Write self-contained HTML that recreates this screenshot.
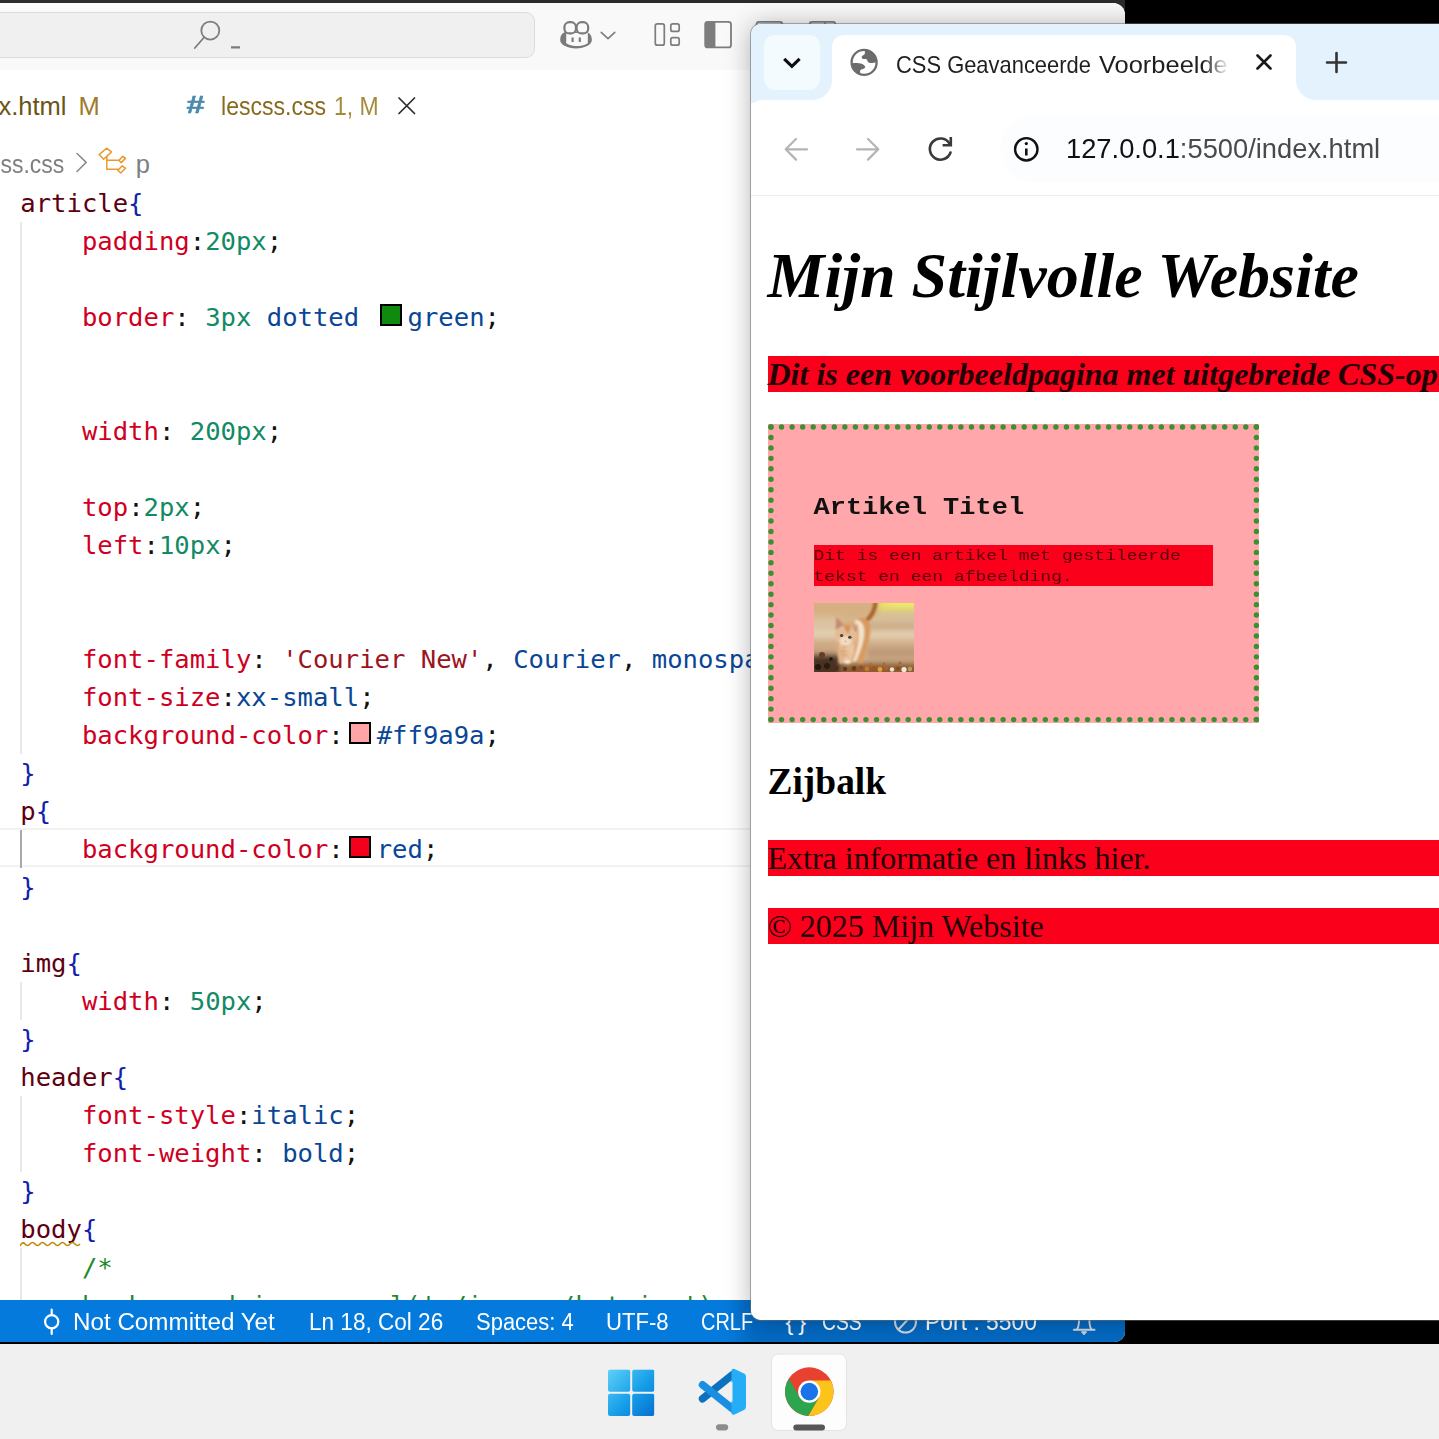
<!DOCTYPE html>
<html lang="nl">
<head>
<meta charset="utf-8">
<title>CSS Geavanceerde Voorbeelden</title>
<style>
*{box-sizing:border-box;margin:0;padding:0}
html,body{width:1439px;height:1439px;overflow:hidden;background:#000}
body:before{content:"";position:absolute;left:0;top:0;width:1125px;height:14px;background:#2b2b2b}
body{position:relative;font-family:"Liberation Sans",sans-serif}
.abs{position:absolute}
/* ---------- VS Code ---------- */
#vsc{position:absolute;left:0;top:3px;width:1125px;height:1339px;background:#fff;border-top-right-radius:12px;border-bottom-right-radius:10px;overflow:hidden}
#vin{position:absolute;left:0;top:-3px;width:1125px;height:1346px}
#titlebar{position:absolute;left:0;top:0;width:100%;height:70px;background:#f9f9f9}
#search{position:absolute;left:-20px;top:12px;width:555px;height:46px;background:#f0f0f0;border:1px solid #dcdcdc;border-radius:9px}
#tabs{position:absolute;left:0;top:70px;width:100%;height:72px;background:#fff}
.uitxt{position:absolute;white-space:nowrap;font-family:"Liberation Sans",sans-serif;transform-origin:0 0}
#code{position:absolute;left:-0.7px;top:184px;width:760px;font-family:"DejaVu Sans Mono","Liberation Mono",monospace;font-size:25.58px;line-height:38px;color:#000}
#code div{height:38px;padding-left:21px;white-space:pre}
.s{color:#5e0010}.p{color:#cf001f}.n{color:#128a64}.v{color:#0a4696}.b{color:#0431fa}.k{color:#111}.c{color:#1f8a2c}.br{color:#1020ae}
.st{color:#9c1420}
.g{position:absolute;left:20px;width:1.5px;background:#e8e8e8}
.sw{display:inline-block;width:22px;height:22px;border:2px solid #000;vertical-align:0.5px;margin-right:6px;margin-left:5px}
.sq{position:relative}
.sq svg{position:absolute;left:0;top:27px;width:62px;height:8px}
#status{position:absolute;left:0;top:1300px;width:100%;height:42px;background:#047bdc;color:#fff}
#status span{position:absolute;top:9.2px;font-size:23.5px;white-space:nowrap;transform-origin:0 0}
/* ---------- Chrome ---------- */
#chr{position:absolute;left:751px;top:24px;width:700px;height:1295.8px;background:#fff;border-top-left-radius:10px;border-bottom-left-radius:10px;overflow:hidden;box-shadow:0 1px 26px rgba(0,0,0,.30),0 0 0 1px rgba(120,128,136,.55)}
#cin{position:absolute;left:-751px;top:-24px;width:1439px;height:1439px}
#chtabs{position:absolute;left:750px;top:23px;width:700px;height:80px;background:#e4f2fd}
#chtool{position:absolute;left:750px;top:100px;width:700px;height:96px;background:#fff;border-bottom:1px solid #ececec;border-top-left-radius:12px}
#tab{position:absolute;left:832px;top:35px;width:464px;height:70px;background:#fff;border-radius:12px 12px 0 0}
#tab:before,#tab:after{content:"";position:absolute;bottom:5px;width:20px;height:20px;background:radial-gradient(circle at 0 0,rgba(255,255,255,0) 19.5px,#fff 20.5px)}
#tab:before{left:-20px}
#tab:after{right:-20px;background:radial-gradient(circle at 100% 0,rgba(255,255,255,0) 19.5px,#fff 20.5px)}
#tsb{position:absolute;left:764px;top:35.4px;width:55.5px;height:55px;border-radius:11px;background:#f3fbff}
#omni{position:absolute;left:1000px;top:116px;width:500px;height:66px;border-radius:33px;background:#fbfdff}
.ctxt{position:absolute;white-space:nowrap;transform-origin:0 0;font-family:"Liberation Sans",sans-serif}
#page{position:absolute;left:750px;top:196.5px;width:700px;height:1125px;background:#fff;font-family:"Liberation Serif",serif;color:#000}

#page .in{position:absolute;left:17.5px;top:0;width:900px}
#page h1{font-size:64px;font-style:italic;font-weight:bold;margin:42.9px 0;line-height:73.6px;white-space:nowrap}
#page p{background:#fb001a;color:#1e0005;font-size:32px;line-height:36px;margin:32px 0;white-space:nowrap}
#page header p{font-style:italic;font-weight:bold;margin-top:0}
#page article{position:relative;width:491.4px;border:6px solid transparent;padding:40px 40px 41.5px 40px;background:#ffa7ab;font-family:"Liberation Mono",monospace;font-size:18px}
#page article h2{font-size:27px;line-height:30.6px;margin:22.4px 0;font-weight:bold;color:#111}
#page article p{font-size:18px;line-height:20.4px;margin:18px 0;white-space:normal;color:#5a000a}
#page article p .ln{filter:blur(.45px)}
#page aside h3{position:relative;top:1px;font-size:37.44px;line-height:43px;margin:36.55px 0 38.05px 0;font-weight:bold}
.ln{display:block;transform-origin:0 73.5%;transform:scaleY(.86);white-space:nowrap}
#cat{display:block;width:100px;height:69px;margin:-1.5px 0 3.5px 0}
/* ---------- Taskbar ---------- */
#task{position:absolute;left:0;top:1344px;width:1439px;height:95px;background:#f0f0f0}
</style>
</head>
<body>
<div id="vsc"><div id="vin">
  <div id="titlebar"><div id="search"></div></div>
  <div id="tabs"></div>
  <svg class="abs" style="left:0;top:0" width="860" height="180" viewBox="0 0 860 180" fill="none" stroke="#7d7d7d" stroke-width="1.8" stroke-linecap="round" stroke-linejoin="round">
    <!-- search -->
    <circle cx="210.3" cy="30.6" r="9"/><path d="M204 37.5 L194.8 48"/>
    <path d="M231 47.3 H240" stroke-width="2.2" stroke-linecap="butt"/>
    <!-- copilot -->
    <path d="M560.2 40 C560.2 35 562.5 32.8 565.5 32 L586.5 32 C589.500 32.8 591.8 35 591.8 40 C591.8 42.5 590.3 44 588.3 45.2 C584.3 47.6 580 48.4 576 48.4 C572 48.4 567.7 47.6 563.7 45.2 C561.7 44 560.2 42.500 560.2 40 Z" fill="#7b7b7b" stroke="none"/>
    <path d="M566.2 33 H587.8 V43.2 C584 45.4 580 46.1 577 46.1 C574 46.1 570 45.4 566.2 43.2 Z" fill="#f9f9f9" stroke="none"/>
    <rect x="564.4" y="22.2" width="11.6" height="11.2" rx="5" fill="#f9f9f9" stroke="#7b7b7b" stroke-width="2.2"/>
    <rect x="576.6" y="22.2" width="11.6" height="11.2" rx="5" fill="#f9f9f9" stroke="#7b7b7b" stroke-width="2.2"/>
    <path d="M572.6 37.600 V42 M579.8 37.600 V42" stroke="#7b7b7b" stroke-width="2.200" stroke-linecap="butt"/>
    <path d="M601.2 32.400 L608 38.700 L614.800 32.400" stroke-width="1.600"/>
    <!-- layout icons -->
    <rect x="655.3" y="23.8" width="9" height="21.4" rx="2" stroke-width="1.7"/>
    <rect x="670.8" y="23.8" width="8.4" height="7.6" rx="2" stroke-width="1.7"/>
    <rect x="670.8" y="37.6" width="8.4" height="7.6" rx="2" stroke-width="1.7"/>
    <rect x="705.2" y="21.8" width="25.8" height="25.6" rx="2.5" stroke-width="1.8"/>
    <path d="M707 21.8 H715.4 V47.4 H707 Q705.2 47.4 705.2 45 V24 Q705.2 21.800 707 21.800 Z" fill="#7d7d7d" stroke="none"/>
    <rect x="756.6" y="21.8" width="25.8" height="25.600" rx="2.5" stroke-width="1.800"/>
    <rect x="809.6" y="21.8" width="25.8" height="25.600" rx="2.5" stroke-width="1.800"/><path d="M825 22 V47" stroke-width="1.800"/>
    <!-- tab close X -->
    <path d="M399 98 L414.5 113.5 M414.5 98 L399 113.5" stroke="#2b2b2b" stroke-width="1.7"/>
    <!-- breadcrumb chevron -->
    <path d="M77 153.5 L86.2 162.4 L77 171.5" stroke="#8a8a8a" stroke-width="1.5"/>
    <!-- symbol icon -->
    <g stroke="#e79a30" stroke-width="1.5">
      <path d="M99.2 154.6 L106.5 148.2 L111.500 151.900 L103.6 159.2 Z"/>
      <path d="M106.8 157 V169.300 H118 M106.8 160.200 H118.800"/>
      <path d="M118.900 160.500 L122.700 156.300 L125.500 158.400 L121.200 162.600 Z"/>
      <path d="M117.900 170.500 L122.200 165.800 L125.500 168.300 L120.700 173 Z"/>
    </g>
  </svg>
  <span class="uitxt" id="t1" style="left:-1.5px;top:92.2px;font-size:25.5px;color:#6b5418">x.html</span>
  <span class="uitxt" id="t2" style="left:78.5px;top:92.2px;font-size:25.5px;color:#a07a2c">M</span>
  <span class="uitxt" id="t3" style="left:186.3px;top:91.5px;font-size:23px;color:#4b89ae;font-weight:bold;font-style:italic;transform:scaleX(1.42);-webkit-text-stroke:0.5px #4b89ae">#</span>
  <span class="uitxt" id="t4" style="left:220.5px;top:92.2px;font-size:25.5px;color:#866a1e;transform:scaleX(.905)">lescss.css</span>
  <span class="uitxt" id="t5" style="left:333.5px;top:92.2px;font-size:25.5px;color:#a68a3c;transform:scaleX(.9)">1, M</span>
  <span class="uitxt" id="t6" style="left:-11px;top:149.5px;font-size:25.5px;color:#7e7e7e;transform:scaleX(.9)">css.css</span>
  <span class="uitxt" id="t7" style="left:135.7px;top:149.5px;font-size:25.5px;color:#7e7e7e">p</span>
  <div class="abs" style="left:0;top:828px;width:1125px;height:2px;background:#f2f2f2"></div>
  <div class="abs" style="left:0;top:865px;width:1125px;height:2px;background:#f2f2f2"></div>
  <div class="g" style="top:222px;height:532px"></div>
  <div class="g" style="top:830px;height:38px;background:#a9a9a9"></div>
  <div class="g" style="top:982px;height:38px"></div>
  <div class="g" style="top:1096px;height:76px"></div>
  <div class="g" style="top:1248px;height:60px"></div>
  <div id="code">
<div><span class="s">article</span><span class="br">{</span></div>
<div>    <span class="p">padding</span><span class="k">:</span><span class="n">20px</span><span class="k">;</span></div>
<div></div>
<div>    <span class="p">border</span><span class="k">:</span> <span class="n">3px</span> <span class="v">dotted</span> <i class="sw" style="background:#0f8a0f"></i><span class="v">green</span><span class="k">;</span></div>
<div></div>
<div></div>
<div>    <span class="p">width</span><span class="k">:</span> <span class="n">200px</span><span class="k">;</span></div>
<div></div>
<div>    <span class="p">top</span><span class="k">:</span><span class="n">2px</span><span class="k">;</span></div>
<div>    <span class="p">left</span><span class="k">:</span><span class="n">10px</span><span class="k">;</span></div>
<div></div>
<div></div>
<div>    <span class="p">font-family</span><span class="k">:</span> <span class="st">'Courier New'</span><span class="k">,</span> <span class="v">Courier</span><span class="k">,</span> <span class="v">monospace</span><span class="k">;</span></div>
<div>    <span class="p">font-size</span><span class="k">:</span><span class="v">xx-small</span><span class="k">;</span></div>
<div>    <span class="p">background-color</span><span class="k">:</span><i class="sw" style="background:#ffa5a7"></i><span class="v">#ff9a9a</span><span class="k">;</span></div>
<div><span class="br">}</span></div>
<div><span class="s">p</span><span class="br">{</span></div>
<div>    <span class="p">background-color</span><span class="k">:</span><i class="sw" style="background:#f4001c"></i><span class="v">red</span><span class="k">;</span></div>
<div><span class="br">}</span></div>
<div></div>
<div><span class="s">img</span><span class="br">{</span></div>
<div>    <span class="p">width</span><span class="k">:</span> <span class="n">50px</span><span class="k">;</span></div>
<div><span class="br">}</span></div>
<div><span class="s">header</span><span class="br">{</span></div>
<div>    <span class="p">font-style</span><span class="k">:</span><span class="v">italic</span><span class="k">;</span></div>
<div>    <span class="p">font-weight</span><span class="k">:</span> <span class="v">bold</span><span class="k">;</span></div>
<div><span class="br">}</span></div>
<div><span class="s sq">body<svg viewBox="0 0 62 8"><path d="M0 5 q2.5 -5 5 -2 t5 0 t5 0 t5 0 t5 0 t5 0 t5 0 t5 0 t5 0 t5 0 t5 0 t5 0" fill="none" stroke="#bf8803" stroke-width="1.5"/></svg></span><span class="br">{</span></div>
<div>    <span class="c">/*</span></div>
<div>    <span class="c">background-image: url('./images/kat.jpg');</span></div>
</div>
  <div id="status">
    <svg class="abs" style="left:0;top:0" width="1125" height="43" viewBox="0 1300 1125 43" fill="none" stroke="#fff" stroke-width="2.2" stroke-linecap="round">
      <circle cx="51.7" cy="1321.7" r="6.6"/><path d="M51.7 1309.5 V1315 M51.7 1328.4 V1334"/>
      <circle cx="905.5" cy="1322" r="10.5" stroke-width="2"/><path d="M898.5 1329.5 L912.5 1314.5" stroke-width="2"/>
      <path d="M1073.8 1329.8 H1094.6 M1076.8 1329.5 C1079 1327 1079 1324 1079 1320 C1079 1315 1081.5 1312 1084.2 1312 C1087 1312 1089.400 1315 1089.400 1320 C1089.400 1324 1089.400 1327 1091.600 1329.500" stroke-width="1.900"/><path d="M1081.800 1331.800 H1086.600 L1084.200 1334.600 Z" fill="#fff" stroke-width="1"/>
    </svg>
    <div class="abs" style="left:725px;top:0;width:400px;height:42px;background:linear-gradient(90deg,rgba(0,20,70,0),rgba(0,20,70,.17) 30px)"></div>
    <span id="s1" style="left:73px;transform:scaleX(1.03)">Not Committed Yet</span>
    <span id="s2" style="left:309px;transform:scaleX(0.96)">Ln 18, Col 26</span>
    <span id="s3" style="left:475.6px;transform:scaleX(0.935)">Spaces: 4</span>
    <span id="s4" style="left:606px;transform:scaleX(0.94)">UTF-8</span>
    <span id="s5" style="left:701px;transform:scaleX(0.85)">CRLF</span>
    <span id="s6" style="left:785.5px;letter-spacing:5px">{}</span>
    <span id="s7" style="left:821.6px;transform:scaleX(0.82)">CSS</span>
    <span id="s8" style="left:924.6px;transform:scaleX(0.975)">Port : 5500</span>
  </div>
</div></div>
<div id="chr"><div id="cin">
  <div id="chtabs"></div>
  <div id="tsb"></div>
  <div id="tab"></div>
  <div id="chtool"></div>
  <div id="omni"></div>
  <svg class="abs" style="left:750px;top:23px" width="689" height="180" viewBox="750 23 689 180" fill="none" stroke-linecap="round" stroke-linejoin="round">
    <path d="M784.2 58.9 L791.9 66.3 L799.6 58.9" stroke="#0d0d14" stroke-width="3.2" stroke-linecap="butt" stroke-linejoin="miter"/>
    <!-- globe -->
    <circle cx="864.1" cy="62.4" r="12.5" fill="#fff" stroke="#6c6c6c" stroke-width="2.3"/>
    <path d="M864.8 50.2 C871.5 50.4 876.3 55.5 876.4 62.2 L873.8 62.8 C871.8 63.3 869.2 63.3 868 62.1 C867.2 61 867.6 59.6 866.5 59.2 C865 58.600 862.6 59.6 862 58.3 C861.4 57 861.5 56.6 862.8 55.6 C864 54.7 864.8 54.4 864.9 53.2 Z" fill="#6c6c6c" stroke="none"/>
    <path d="M851.8 63.4 C854 62.900 855.800 62.900 857.300 63.1 C859.500 63.4 861.8 63.6 863.1 64.500 C864.6 65.500 865.500 66.600 865.1 67.600 C864.7 68.600 864 68.700 863 69 C861.8 69.400 860.5 69.600 860.2 70.5 C859.900 71.600 860.400 72.800 860.4 74.2 C855.500 72.800 851.900 68.400 851.800 63.400 Z" fill="#6c6c6c" stroke="none"/>
    <!-- close / plus -->
    <path d="M1257.5 55.5 L1270.5 68.5 M1270.5 55.5 L1257.5 68.5" stroke="#1a1a1a" stroke-width="2.6"/>
    <path d="M1327 62.5 H1346 M1336.5 53 V72" stroke="#333" stroke-width="2.6"/>
    <!-- nav -->
    <path d="M807 149.3 H786 M796 139 L785.7 149.3 L796 159.6" stroke="#b4b4b4" stroke-width="2.2"/>
    <path d="M857 149.3 H878 M868 139 L878.3 149.3 L868 159.6" stroke="#b4b4b4" stroke-width="2.2"/>
    <path d="M949.5 143.5 A10.6 10.6 0 1 0 950.5 152.5" stroke="#3a3a3a" stroke-width="2.6"/>
    <path d="M950.8 137 V145.2 H942.6" stroke="#3a3a3a" stroke-width="2.6" stroke-linecap="butt" stroke-linejoin="miter"/>
    <circle cx="1026.3" cy="149.3" r="11.2" stroke="#111" stroke-width="2.4"/>
    <path d="M1026.3 148.5 V155.5" stroke="#111" stroke-width="2.6" stroke-linecap="butt"/>
    <circle cx="1026.3" cy="143.6" r="1.6" fill="#111" stroke="none"/>
  </svg>
  <span class="ctxt" id="c1" style="left:895.5px;top:50.8px;font-size:24px;color:#1f1f1f;transform:scaleX(.913)">CSS Geavanceerde</span><span class="ctxt" id="c1b" style="left:1098.5px;top:50.8px;font-size:24px;color:#1f1f1f;transform:scaleX(1.06)">Voorbeelden</span>
  <div class="abs" style="left:1204px;top:40px;width:28px;height:44px;background:linear-gradient(90deg,rgba(255,255,255,0),#fff 90%)"></div>
  <div class="abs" style="left:1228px;top:40px;width:24px;height:44px;background:#fff"></div>
  <span class="ctxt" id="c2" style="left:1066px;top:133.4px;font-size:28px;color:#111;transform:scaleX(.975)">127.0.0.1<span style="color:#4a4a4a">:5500/index.html</span></span>
  <div id="page"><div class="in">
    <header><h1>Mijn Stijlvolle Website</h1><p>Dit is een voorbeeldpagina met uitgebreide CSS-opmaak en structuur.</p></header>
    <article><svg class="abs" style="left:-6px;top:-6px" width="492" height="299" fill="none" stroke="#3b9030" stroke-width="5.400" stroke-linecap="round">
      <path d="M3 3 H488.400" stroke-dasharray="0.01 10.541"/><path d="M3 295.600 H488.400" stroke-dasharray="0.01 10.541"/>
      <path d="M3 3 V295.600" stroke-dasharray="0.01 10.438"/><path d="M488.400 3 V295.600" stroke-dasharray="0.01 10.438"/>
    </svg><h2><span class="ln">Artikel Titel</span></h2><p><span class="ln">Dit is een artikel met gestileerde</span><span class="ln">tekst en een afbeelding.</span></p><svg id="cat" viewBox="0 0 100 69" preserveAspectRatio="none">
      <defs>
        <filter id="b1" x="-10%" y="-10%" width="120%" height="120%"><feGaussianBlur stdDeviation="3.2"/></filter>
        <filter id="b2" x="-10%" y="-10%" width="120%" height="120%"><feGaussianBlur stdDeviation="0.9"/></filter>
        <filter id="b3" x="-10%" y="-10%" width="120%" height="120%"><feGaussianBlur stdDeviation="0.55"/></filter>
        <clipPath id="cc"><rect width="100" height="69"/></clipPath>
      </defs>
      <g clip-path="url(#cc)">
        <rect width="100" height="69" fill="#d3b792"/>
        <g filter="url(#b1)">
          <rect x="-5" y="-5" width="70" height="20" fill="#d6b083"/>
          <rect x="64" y="-6" width="45" height="14" fill="#e6e068"/>
          <rect x="74" y="-6" width="30" height="8" fill="#eeec70"/>
          <rect x="-5" y="14" width="30" height="14" fill="#dcc3a0"/>
          <rect x="55" y="12" width="50" height="9" fill="#d9c19d"/>
          <rect x="55" y="20" width="50" height="8" fill="#c9a880"/>
          <rect x="-5" y="27" width="110" height="9" fill="#e3cfb0"/>
          <rect x="50" y="36" width="55" height="8" fill="#d1b08a"/>
          <rect x="-5" y="36" width="30" height="14" fill="#cda983"/>
          <rect x="52" y="44" width="55" height="12" fill="#c09a78"/>
          <rect x="-5" y="51" width="32" height="24" fill="#4a3220"/>
          <rect x="28" y="60" width="80" height="14" fill="#8a5a30"/>
        </g>
        <g filter="url(#b2)">
          <!-- tail -->
          <path d="M61.5 -1 C61 7 58 13 52 18 L49 24" fill="none" stroke="#a9652f" stroke-width="4.2" stroke-linecap="round"/>
          <!-- back leg / body -->
          <path d="M44 16 C50 13 57 17 56.5 26 C56 38 51 50 49 60 L44 60 C45 48 41 30 44 16Z" fill="#d99a5f"/>
          <path d="M41 17 C47 16 52 22 50 34 C48.5 44 44 54 41.5 59 L37 58 C41 46 43 30 41 17Z" fill="#f3e3cc"/>
          <!-- body / chest -->
          <path d="M24 28 C26 18 40 15 44 24 C47 36 42 52 38 60 L25 60 C23 50 22 38 24 28Z" fill="#dfa877"/>
          <path d="M26 40 C30 44 36 44 40 40 C41 48 38 56 36 60 L27 60 C25 54 25 46 26 40Z" fill="#e9c8a4"/>
          <!-- ears -->
          <path d="M21.5 27 L22.5 13.5 L30 22Z" fill="#c98c69"/>
          <path d="M36.5 24 L44 21.5 L43.5 32Z" fill="#cf9673"/>
          <!-- head -->
          <ellipse cx="32.3" cy="32.5" rx="11.2" ry="10.2" fill="#e6bb92"/>
          <ellipse cx="31.5" cy="38" rx="6" ry="4.8" fill="#f1dcc2"/>
          <path d="M29 22 L34 31 L37 23Z" fill="#d08f5a"/>
          <!-- legs -->
          <rect x="24.5" y="46" width="5.5" height="15" rx="2" fill="#e2b58b"/>
          <rect x="31.5" y="48" width="5" height="11" rx="2" fill="#e8c19a"/>
          <ellipse cx="33.5" cy="59" rx="3.2" ry="1.8" fill="#f4efe8"/>
          <path d="M27 44 h6 M27 48 h6 M28 52 h5" stroke="#c98248" stroke-width="1.2"/>
        </g>
        <g filter="url(#b3)">
          <path d="M23.3 25 L23.5 17 L27.2 22.5Z" fill="#b3908c"/>
          <path d="M38.8 25.5 L42.4 23.8 L42.2 29.3Z" fill="#c09d94"/>
          <ellipse cx="27.6" cy="32.6" rx="1.7" ry="1.5" fill="#3d4450"/>
          <ellipse cx="35.8" cy="34.2" rx="1.8" ry="1.5" fill="#3d4450"/>
          <path d="M30.6 37.8 L32.4 37.9 L31.4 39.2Z" fill="#c98a7a"/>
          <!-- leaves -->
          <circle cx="17" cy="56" r="1.8" fill="#1d120a"/>
          <circle cx="8" cy="52" r="3" fill="#6a3a22"/>
          <circle cx="13" cy="63" r="3" fill="#2a1a0e"/>
          <circle cx="4" cy="64" r="3" fill="#23160c"/>
          <circle cx="22" cy="65" r="2.6" fill="#4b2f18"/>
          <circle cx="31" cy="66" r="2.2" fill="#5c3a1c"/>
          <circle cx="40" cy="65.5" r="2.4" fill="#6b3a1c"/>
          <circle cx="47" cy="64.5" r="2" fill="#9a4a1e"/>
          <circle cx="53" cy="66" r="2.4" fill="#c8742a"/>
          <circle cx="60" cy="65" r="2" fill="#a8501e"/>
          <circle cx="66" cy="66.5" r="2.4" fill="#e3a038"/>
          <circle cx="72" cy="65" r="2" fill="#b4602a"/>
          <circle cx="78" cy="66.5" r="2.2" fill="#f0e4c8"/>
          <circle cx="84" cy="65.5" r="2" fill="#8a4a22"/>
          <circle cx="90" cy="66.5" r="2.6" fill="#f1ead6"/>
          <circle cx="96" cy="66" r="2.2" fill="#b8a060"/>
          <circle cx="57" cy="61.5" r="1.6" fill="#b06a30"/>
          <circle cx="70" cy="61" r="1.5" fill="#a86a3a"/>
          <circle cx="86" cy="60" r="1.6" fill="#9a6a48"/>
        </g>
      </g>
    </svg></article>
    <aside><h3>Zijbalk</h3><p>Extra informatie en links hier.</p></aside>
    <footer><p>© 2025 Mijn Website</p></footer>
  </div></div>
</div></div>
<div id="task">
  <svg class="abs" style="left:0;top:0" width="1439" height="95" viewBox="0 1344 1439 95">
    <defs>
      <linearGradient id="wg" x1="0" y1="0" x2="1" y2="1"><stop offset="0" stop-color="#5fd0f8"/><stop offset=".55" stop-color="#159ee8"/><stop offset="1" stop-color="#0670d0"/></linearGradient>
      <clipPath id="wc"><rect x="608" y="1369.4" width="22.2" height="22.3" rx="2"/><rect x="632.2" y="1369.4" width="22.2" height="22.3" rx="2"/><rect x="608" y="1393.7" width="22.2" height="22.3" rx="2"/><rect x="632.2" y="1393.7" width="22.2" height="22.3" rx="2"/></clipPath>
    </defs>
    <rect x="608" y="1369.4" width="46.4" height="46.6" fill="url(#wg)" clip-path="url(#wc)"/>
    <!-- vscode -->
    <g transform="translate(696.5 1366.8) scale(.5)">
      <path d="M12 64 L72 16" stroke="#0b70be" stroke-width="15" stroke-linecap="round" fill="none"/>
      <path d="M12 36 L72 84" stroke="#1a8fe2" stroke-width="15" stroke-linecap="round" fill="none"/>
      <path d="M70 6.5 Q72 3 76 4.500 L95 13.5 Q99 15.500 99 20 V80 Q99 84.500 95 86.500 L76 95.500 Q72 97 70 93.500 Z" fill="#25aef6"/>
      <path d="M72 30 L46 50 L72 70 Z" fill="#f0f0f0"/>
    </g>
    <rect x="716" y="1424.2" width="12.2" height="6.2" rx="3.1" fill="#8c8c8c"/>
    <!-- chrome button -->
    <rect x="771.5" y="1354" width="75" height="76.500" rx="7" fill="#fdfdfd" stroke="#e4e4e4" stroke-width="1"/>
    <circle cx="809.3" cy="1391.6" r="24.3" fill="#e8412f"/>
    <path d="M809.30 1380.40 L830.87 1380.40 A24.30 24.30 0 0 1 808.22 1415.88 L819.00 1397.20 Z" fill="#fcc31a"/>
    <path d="M819.00 1397.20 L808.22 1415.88 A24.30 24.30 0 0 1 788.82 1378.52 L799.60 1397.20 Z" fill="#2da44e"/>
    <circle cx="809.3" cy="1391.6" r="11.2" fill="#fff"/>
    <circle cx="809.3" cy="1391.6" r="8.8" fill="#1a73e8"/>
    <rect x="793.3" y="1424.600" width="31.700" height="6" rx="3" fill="#575757"/>
  </svg>
</div>
</body>
</html>
